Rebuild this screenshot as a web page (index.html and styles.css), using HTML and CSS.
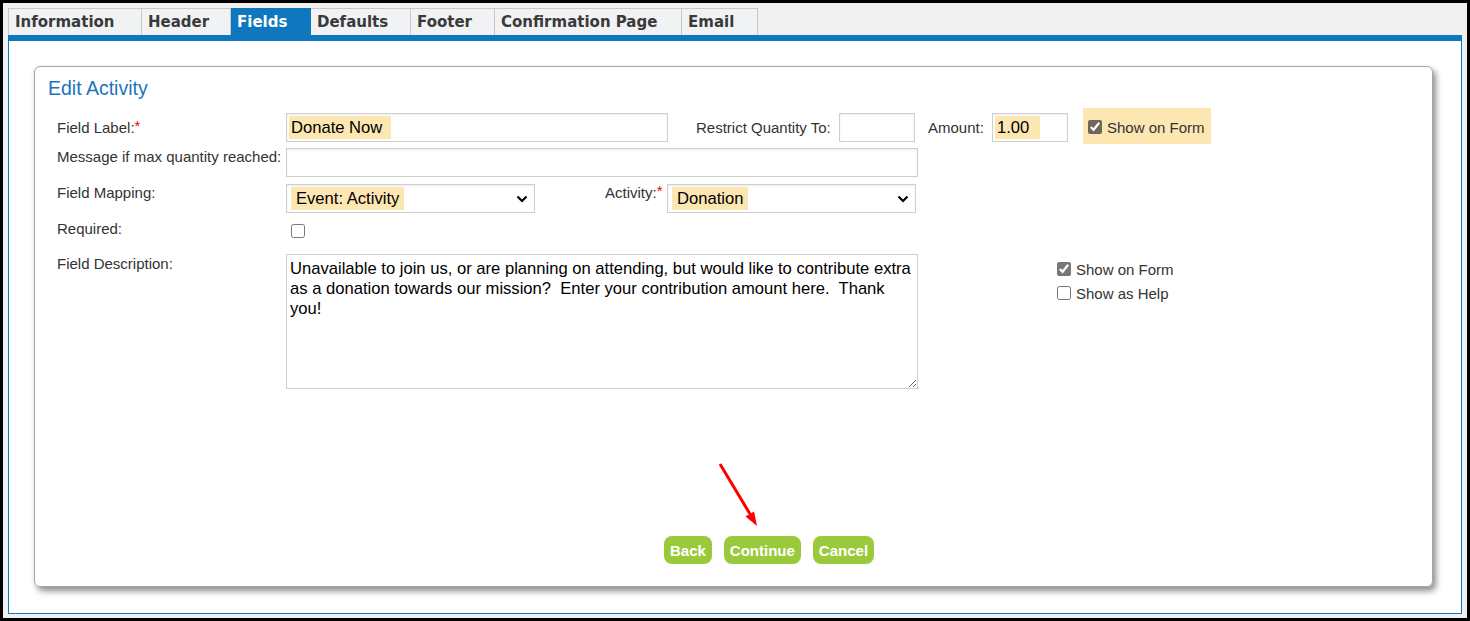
FILE: index.html
```html
<!DOCTYPE html>
<html lang="en">
<head>
    <meta charset="UTF-8">
    <title>Edit Activity</title>
    <link rel="stylesheet" href="styles.css">
</head>
<body>
<div class="frame">
    <ul class="tabs">
        <li class="t-info">Information</li>
        <li class="t-header">Header</li>
        <li class="t-fields active">Fields</li>
        <li class="t-defaults">Defaults</li>
        <li class="t-footer">Footer</li>
        <li class="t-confirm">Confirmation Page</li>
        <li class="t-email">Email</li>
    </ul>

    <div class="content">
        <div class="panel">
            <h2 class="title">Edit Activity</h2>

            <!-- row 1 -->
            <div class="row row1">
                <label class="lbl">Field Label:<span class="req">*</span></label>
                <div class="field w-label"><span class="hl hl-label">Donate Now</span></div>
                <label class="lbl lbl-restrict">Restrict Quantity To:</label>
                <div class="field w-small"></div>
                <label class="lbl lbl-amount">Amount:</label>
                <div class="field w-small"><span class="hl hl-amount">1.00</span></div>
                <div class="showbox">
                    <input type="checkbox" checked>
                    <span>Show on Form</span>
                </div>
            </div>

            <!-- row 2 -->
            <div class="row row2">
                <label class="lbl">Message if max quantity reached:</label>
                <div class="field w-wide"></div>
            </div>

            <!-- row 3 -->
            <div class="row row3">
                <label class="lbl">Field Mapping:</label>
                <div class="field select w-select">
                    <span class="hl hl-select">Event: Activity</span>
                    <svg class="chev" width="12" height="8" viewBox="0 0 12 8"><polyline points="1.5,1.5 6,6 10.5,1.5" fill="none" stroke="#000" stroke-width="2.2"/></svg>
                </div>
                <label class="lbl lbl-activity">Activity:<span class="req">*</span></label>
                <div class="field select w-select">
                    <span class="hl hl-select">Donation</span>
                    <svg class="chev" width="12" height="8" viewBox="0 0 12 8"><polyline points="1.5,1.5 6,6 10.5,1.5" fill="none" stroke="#000" stroke-width="2.2"/></svg>
                </div>
            </div>

            <!-- row 4 -->
            <div class="row row4">
                <label class="lbl">Required:</label>
                <input type="checkbox" class="chk-req">
            </div>

            <!-- row 5 -->
            <div class="row row5">
                <label class="lbl">Field Description:</label>
                <textarea class="desc">Unavailable to join us, or are planning on attending, but would like to contribute extra as a donation towards our mission?  Enter your contribution amount here.  Thank you!</textarea>
                <div class="side">
                    <label class="opt"><input type="checkbox" checked> Show on Form</label>
                    <label class="opt"><input type="checkbox"> Show as Help</label>
                </div>
            </div>

            <div class="buttons">
                <button class="btn">Back</button>
                <button class="btn">Continue</button>
                <button class="btn">Cancel</button>
            </div>

            <svg class="arrow" width="70" height="70" viewBox="0 0 70 70">
                <line x1="20" y1="4" x2="50" y2="54" stroke="#f00" stroke-width="3"/>
                <polygon points="57,66 45.5,56.6 54.1,51.4" fill="#f00"/>
            </svg>
        </div>
    </div>
</div>
</body>
</html>
```

FILE: styles.css
```css
html, body{
    margin: 0;
    padding: 0;
}
body{
    font-family: "Liberation Sans", Arial, sans-serif;
}
.frame{
    width: 1470px;
    height: 621px;
    box-sizing: border-box;
    border: 3px solid #000;
    background-color: #f0f0f0;
    padding: 5px 5px 4px 5px;
    display: flex;
    flex-direction: column;
}

/* tabs */
.tabs{
    list-style: none;
    margin: 0;
    padding: 0;
    display: flex;
    height: 27px;
}
.tabs li{
    box-sizing: border-box;
    height: 27px;
    padding: 4px 0 0 6px;
    background-color: #f1f2f4;
    border: 1px solid #c8c8c8;
    border-bottom: none;
    border-left: none;
    font-family: "DejaVu Sans", sans-serif;
    font-weight: bold;
    font-size: 15px;
    color: #3a3a3a;
    white-space: nowrap;
    overflow: hidden;
}
.tabs li:first-child{
    border-left: 1px solid #c8c8c8;
}
.tabs li.active{
    background-color: #0f77bd;
    border-color: #0f77bd;
    color: #fff;
}
.t-info{ width: 134px; }
.t-header{ width: 89px; }
.t-fields{ width: 80px; }
.t-defaults{ width: 100px; }
.t-footer{ width: 84px; }
.t-confirm{ width: 187px; }
.t-email{ width: 76px; }

.content{
    flex: 1;
    background-color: #fff;
    border: 1px solid #0f77bd;
    border-top: 6px solid #0f77bd;
    padding: 25px 28px 0 25px;
}

/* panel */
.panel{
    position: relative;
    border: 1px solid #a5a5a5;
    border-radius: 6px;
    box-shadow: 3px 4px 6px rgba(0,0,0,0.45);
    padding: 9px 13px 22px 13px;
}
.title{
    margin: 0;
    font-weight: normal;
    font-size: 19.5px;
    line-height: 24px;
    color: #1b75bb;
}
.row{
    display: flex;
    align-items: flex-start;
    padding-left: 9px;
}
.lbl{
    display: block;
    width: 229px;
    flex: none;
    font-size: 15px;
    line-height: 18px;
    color: #333;
}
.req{
    color: #e00;
    position: relative;
    top: -2px;
}
.field{
    box-sizing: border-box;
    height: 29px;
    padding: 2px;
    border: 1px solid #cfcfcf;
    box-shadow: inset 0 1px 2px rgba(0,0,0,0.08);
    background-color: #fff;
    flex: none;
}
.hl{
    display: inline-block;
    height: 23px;
    line-height: 23px;
    font-size: 16.6px;
    color: #000;
    background-color: #fce6b2;
}
.hl-label{ padding: 0 9px 0 2px; }
.hl-amount{ padding: 0 11px 0 2px; }
.hl-select{ padding: 0 5px; margin-left: 2px; }

.w-label{ width: 382px; }
.w-small{ width: 76px; }
.w-wide{ width: 632px; }
.w-select{ width: 249px; }

.select{
    display: flex;
    align-items: center;
    justify-content: space-between;
    padding-right: 6px;
}
.chev{
    flex: none;
}

.row1{
    margin-top: 8px;
    height: 36px;
}
.row1 .lbl{ margin-top: 11px; }
.row1 .field{ margin-top: 5px; }
.lbl-restrict{
    width: 143px;
    margin-left: 28px;
}
.lbl-amount{
    width: 64px;
    margin-left: 13px;
}
.showbox{
    box-sizing: border-box;
    margin-left: 15px;
    width: 128px;
    height: 36px;
    background-color: #fce6b2;
    display: flex;
    align-items: center;
    padding-left: 4px;
    padding-top: 2px;
    font-size: 15px;
    color: #333;
}
.showbox input{
    width: 14px;
    height: 14px;
    margin: 0 5px 0 1px;
    accent-color: #6e6658;
}

.row2{
    margin-top: 4px;
}
.row3{
    margin-top: 7px;
}
.lbl-activity{
    width: 62px;
    margin-left: 70px;
}
.row4{
    margin-top: 6px;
}
.row4 .lbl{ margin-top: 1px; }
.chk-req{
    width: 14px;
    height: 14px;
    margin: 5px 0 0 5px;
}
.row5{
    margin-top: 16px;
}
.row5 .lbl{ margin-top: 1px; }
.desc{
    box-sizing: border-box;
    width: 632px;
    height: 135px;
    margin: 0;
    padding: 4px 3px;
    border: 1px solid #cfcfcf;
    font-family: "Liberation Sans", Arial, sans-serif;
    font-size: 16.6px;
    line-height: 20px;
    color: #000;
    flex: none;
}
.side{
    margin-left: 139px;
    padding-top: 3px;
}
.opt{
    display: flex;
    align-items: center;
    height: 24px;
    font-size: 15px;
    color: #333;
}
.opt input{
    width: 14px;
    height: 14px;
    margin: 0 5px 0 0;
    accent-color: #777;
}

/* buttons */
.buttons{
    display: flex;
    gap: 12px;
    margin: 147px 0 0 616px;
}
.btn{
    height: 28px;
    padding: 0 6px;
    border: none;
    border-radius: 8px;
    background-color: #9aca3c;
    color: #fff;
    font-family: "Liberation Sans", Arial, sans-serif;
    font-weight: bold;
    font-size: 15px;
}

.arrow{
    position: absolute;
    left: 665px;
    top: 393px;
}
```
